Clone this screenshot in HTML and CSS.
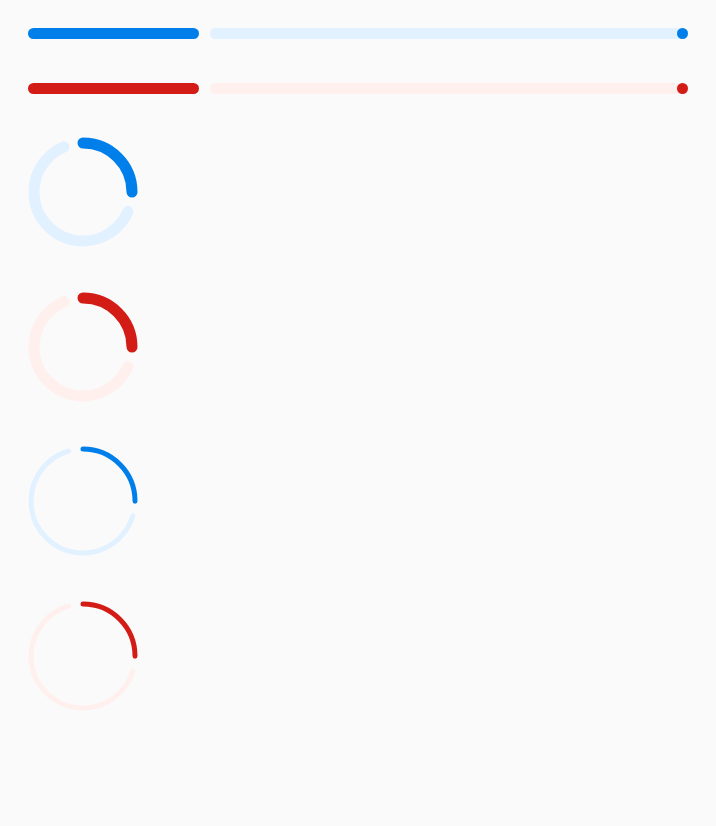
FILE: index.html
```html
<!DOCTYPE html>
<html>
<head>
<meta charset="utf-8">
<link rel="stylesheet" href="styles.css">
</head>
<body>
<main class="page">
  <div class="linear linear-blue">
    <div class="active"></div>
    <div class="track"><span class="stop"></span></div>
  </div>
  <div class="linear linear-red">
    <div class="active"></div>
    <div class="track"><span class="stop"></span></div>
  </div>

  <svg class="circ circ-blue" width="110" height="110" viewBox="0 0 110 110">
    <g transform="rotate(-90 55 55)">
      <circle class="trk" cx="55" cy="55" r="49" stroke-width="11" stroke-dasharray="190.91 400" stroke-dashoffset="-96.97"/>
      <circle class="act" cx="55" cy="55" r="49" stroke-width="11" stroke-dasharray="76.97 400"/>
    </g>
  </svg>
  <svg class="circ circ-red" width="110" height="110" viewBox="0 0 110 110">
    <g transform="rotate(-90 55 55)">
      <circle class="trk" cx="55" cy="55" r="49" stroke-width="11" stroke-dasharray="190.91 400" stroke-dashoffset="-96.97"/>
      <circle class="act" cx="55" cy="55" r="49" stroke-width="11" stroke-dasharray="76.97 400"/>
    </g>
  </svg>
  <svg class="circ circ-blue" width="110" height="110" viewBox="0 0 110 110">
    <g transform="rotate(-90 55 55)">
      <circle class="trk" cx="55" cy="55" r="52" stroke-width="5" stroke-dasharray="215.05 400" stroke-dashoffset="-96.68"/>
      <circle class="act" cx="55" cy="55" r="52" stroke-width="5" stroke-dasharray="81.68 400"/>
    </g>
  </svg>
  <svg class="circ circ-red" width="110" height="110" viewBox="0 0 110 110">
    <g transform="rotate(-90 55 55)">
      <circle class="trk" cx="55" cy="55" r="52" stroke-width="5" stroke-dasharray="215.05 400" stroke-dashoffset="-96.68"/>
      <circle class="act" cx="55" cy="55" r="52" stroke-width="5" stroke-dasharray="81.68 400"/>
    </g>
  </svg>
</main>
</body>
</html>
```

FILE: styles.css
```css
html, body {
  margin: 0;
  padding: 0;
  background: #fafafa;
  font-family: "Roboto", "Liberation Sans", sans-serif;
}

.page {
  display: flex;
  flex-direction: column;
  align-items: flex-start;
  padding: 28px 28px 0 28px;
}

.linear {
  display: flex;
  width: 660px;
  height: 11px;
  gap: 11px;
}

.linear + .linear {
  margin-top: 44px;
}

.linear .active {
  width: 170.5px;
  height: 100%;
  border-radius: 6px;
}

.linear .track {
  position: relative;
  flex: 1;
  height: 100%;
  border-radius: 6px;
}

.linear .stop {
  position: absolute;
  right: 0;
  top: 0;
  width: 11px;
  height: 11px;
  border-radius: 50%;
}

.linear-blue .active, .linear-blue .stop { background: #007fea; }
.linear-blue .track { background: #e2f1ff; }
.linear-red .active, .linear-red .stop { background: #d41c17; }
.linear-red .track { background: #fff0ee; }

.circ {
  display: block;
  margin-top: 44.5px;
}

.linear + .circ {
  margin-top: 43px;
}

.circ circle {
  fill: none;
  stroke-linecap: round;
}

.circ-blue .act { stroke: #007fea; }
.circ-blue .trk { stroke: #e2f1ff; }
.circ-red .act { stroke: #d41c17; }
.circ-red .trk { stroke: #fff0ee; }
```
